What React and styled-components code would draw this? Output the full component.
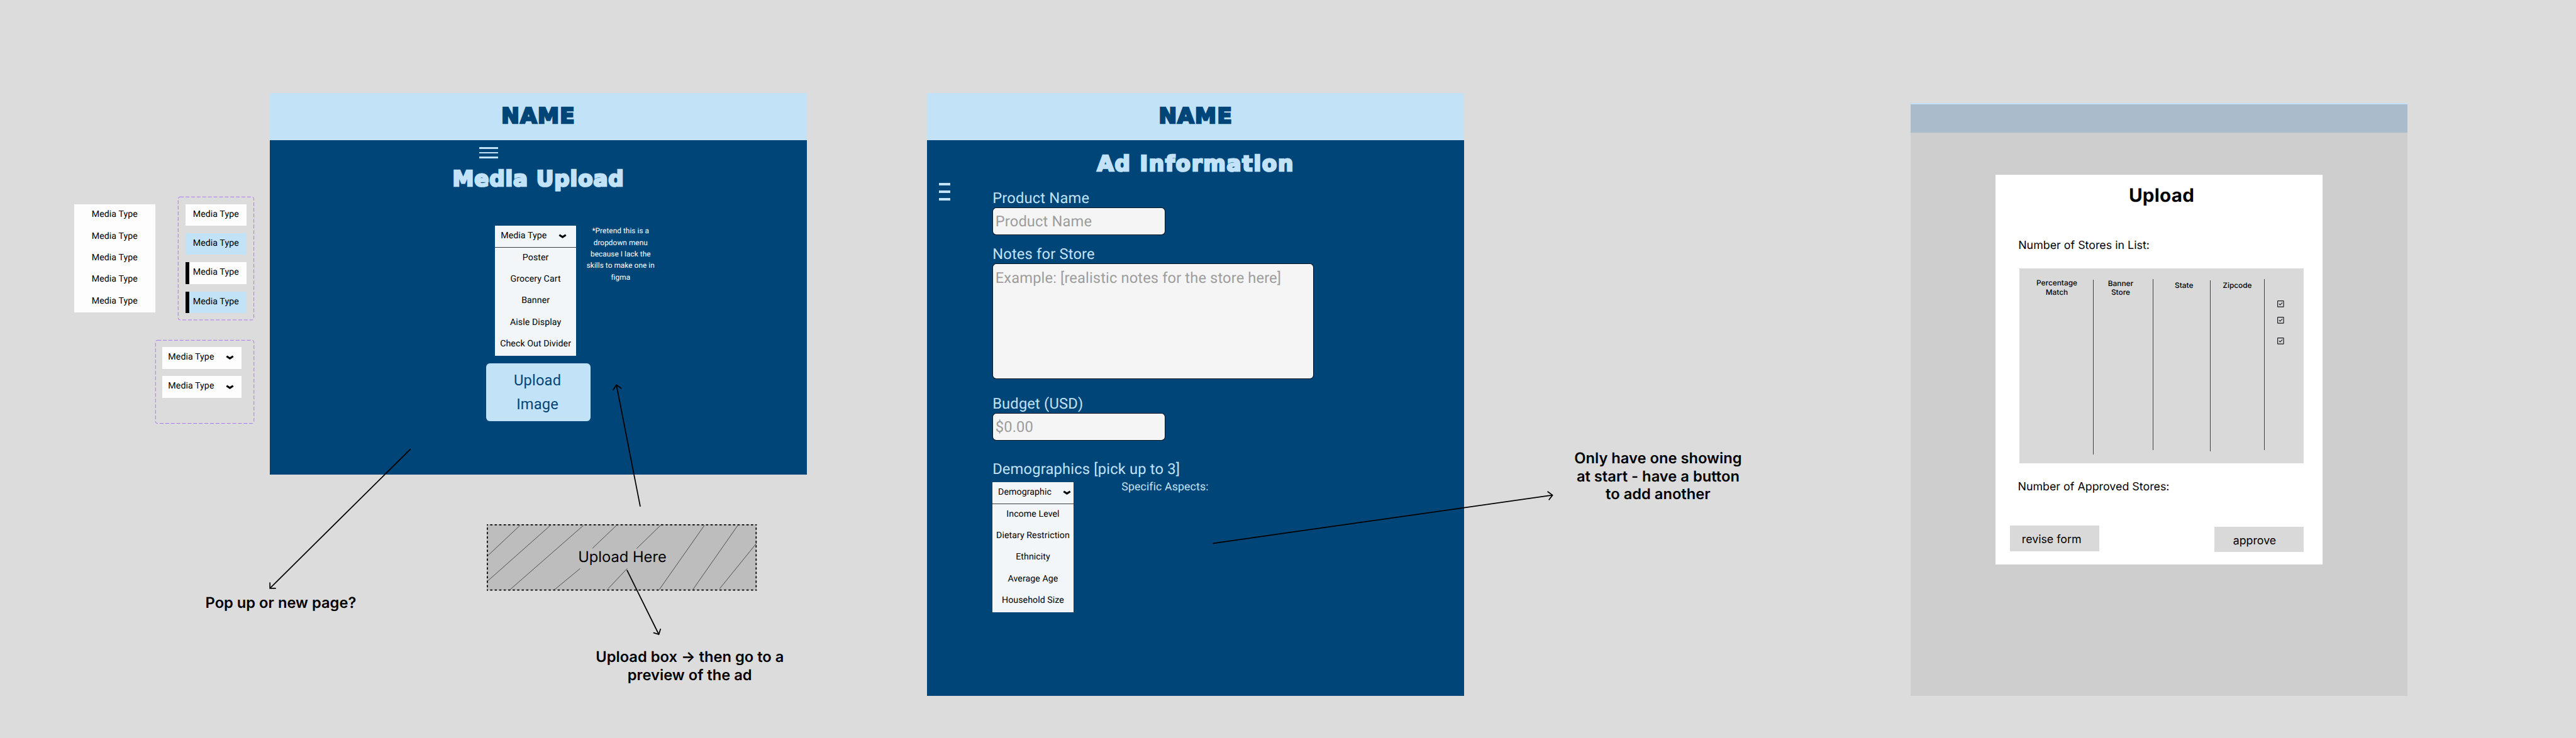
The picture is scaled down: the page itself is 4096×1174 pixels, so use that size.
import React from "react";
import styled, { createGlobalStyle, css } from "styled-components";

const SCALE = 4096 / 6909;
const u = (n) => `${(n * SCALE).toFixed(3)}px`;

const color = {
  canvas: "#dcdcdc",
  navy: "#004578",
  sky: "#c2e2f7",
  option: "#f2f6f9",
  paper: "#fdfdfd",
  field: "#f5f5f5",
  placeholder: "#9d9d9d",
  panel: "#d9d9d9",
  hatch: "#bdbdbd",
  violet: "#9747ff",
};

const GlobalStyle = createGlobalStyle`
  *, *::before, *::after { box-sizing: border-box; }
  html, body { margin: 0; padding: 0; background: ${color.canvas}; }
  button { border: 0; margin: 0; font: inherit; color: inherit; display: block; }
`;

const roboto = css`
  font-family: Roboto, "Liberation Sans", sans-serif;
`;
const inter = css`
  font-family: Inter, "Liberation Sans", sans-serif;
`;

const Canvas = styled.main`
  position: relative;
  width: 4096px;
  height: 1174px;
  overflow: hidden;
  background: ${color.canvas};
  color: #000;
  text-rendering: geometricPrecision;
  ${roboto}
`;

/* An object dropped on the free canvas at its own place */
const Placed = styled.section`
  position: absolute;
  left: ${(p) => u(p.$x)};
  top: ${(p) => u(p.$y)};
`;

/* ---------- option lists ---------- */

const OptionList = styled.div`
  width: ${u(217)};
  background: ${(p) => (p.$tinted ? color.option : color.paper)};
`;

const Option = styled.div`
  display: flex;
  justify-content: center;
  height: ${u(58)};
  line-height: ${u(55.8)};
  font-size: ${u(24)};
  letter-spacing: ${u(0.08)};
  white-space: nowrap;
`;

const SelectHead = styled(Option)`
  position: relative;
  justify-content: space-between;
  padding: 0 ${(p) => u(p.$endPad)} 0 ${u(15)};
  ${(p) =>
    p.$ruled &&
    css`
      &::after {
        content: "";
        position: absolute;
        left: 0;
        right: 0;
        bottom: 0;
        height: 1px;
        background: rgba(0, 0, 0, 0.75);
      }
    `}
`;

const ChevronSvg = styled.svg`
  flex: none;
  width: ${u(22)};
  height: ${u(13)};
  margin-top: ${u(22.2)};
`;

const Chevron = () => (
  <ChevronSvg viewBox="0 0 22 13">
    <path d="M2.2 2.9 L11 8.7 L19.8 2.9" fill="none" stroke="#000" strokeWidth="5.2" />
  </ChevronSvg>
);

/* ---------- component sets ---------- */

const SetBox = styled(Placed)`
  width: ${(p) => u(p.$w)};
  height: ${(p) => u(p.$h)};
  padding: ${u(19.5)} ${u(20)};
`;

const SetOutline = styled.svg`
  position: absolute;
  inset: 0;
  width: 100%;
  height: 100%;
  overflow: visible;
`;

const VariantStack = styled.div`
  display: flex;
  flex-direction: column;
  gap: ${u(20)};
`;

const Variant = styled(Option)`
  width: ${u(164)};
  background: ${(p) => (p.$hover ? color.sky : color.paper)};
  box-shadow: ${(p) => (p.$selected ? `inset ${u(10)} 0 0 #000` : "none")};
`;

const HeadVariant = styled(SelectHead)`
  width: ${u(211)};
  background: ${color.paper};
`;

const DashedSet = ({ x, y, w, h, children }) => (
  <SetBox $x={x} $y={y} $w={w} $h={h}>
    <SetOutline viewBox={`0 0 ${w} ${h}`}>
      <rect x="0.5" y="0.5" width={w - 1} height={h - 1} rx="5" fill="none" stroke={color.violet} strokeWidth="1.15" strokeDasharray="10 5" />
    </SetOutline>
    <VariantStack>{children}</VariantStack>
  </SetBox>
);

/* ---------- blue page frames ---------- */

const Frame = styled(Placed)`
  display: flex;
  flex-direction: column;
  width: ${u(1440)};
  height: ${(p) => u(p.$h)};
  background: ${color.navy};
`;

const display = css`
  font-family: "DejaVu Sans", sans-serif;
  font-weight: 700;
  font-size: ${u(57.5)};
  line-height: ${u(60)};
  white-space: nowrap;
  -webkit-text-stroke: ${u(4.6)} currentColor;
  stroke-linejoin: round;
`;

const Banner = styled.header`
  display: flex;
  align-items: center;
  justify-content: center;
  height: ${u(128)};
  padding-top: ${u(2)};
  background: ${color.sky};
  color: ${color.navy};
`;

const Brand = styled.div`
  ${display}
  letter-spacing: ${u(2.3)};
`;

const Title = styled.h1`
  ${display}
  margin: ${(p) => u(p.$top)} 0 0;
  text-align: center;
  color: ${color.sky};
  letter-spacing: ${(p) => u(p.$spacing)};
`;

const MenuIcon = styled.div`
  display: flex;
  flex: none;
  flex-direction: column;
  justify-content: space-between;
  width: ${(p) => u(p.$w)};
  height: ${(p) => u(p.$h)};
  margin: ${(p) => u(p.$top)} 0 0 ${(p) => u(p.$left)};
`;

const MenuBar = styled.span`
  height: ${(p) => u(p.$thick)};
  background: ${color.sky};
`;

const Hamburger = ({ thick, ...box }) => (
  <MenuIcon {...box}>
    <MenuBar $thick={thick} />
    <MenuBar $thick={thick} />
    <MenuBar $thick={thick} />
  </MenuIcon>
);

const PickerRow = styled.div`
  display: flex;
  align-items: flex-start;
  gap: ${u(19.5)};
  margin-top: ${u(93.4)};
  padding-left: ${u(604)};
`;

const SideNote = styled.p`
  width: ${u(200)};
  margin: ${u(-1.9)} 0 0;
  font-size: ${u(20)};
  line-height: ${u(31)};
  letter-spacing: ${u(0.08)};
  text-align: center;
  color: #fff;
`;

const UploadButton = styled.button`
  align-self: center;
  width: ${u(280)};
  height: ${u(155)};
  margin-top: ${u(21)};
  padding: ${u(3)} ${u(5)} 0 0;
  border-radius: ${u(10)};
  background: ${color.sky};
  color: ${color.navy};
  font-size: ${u(40)};
  line-height: ${u(63)};
  letter-spacing: ${u(0.25)};
  text-align: center;
`;

/* ---------- ad form ---------- */

const FormArea = styled.div`
  display: flex;
  align-items: flex-start;
`;

const Form = styled.div`
  display: flex;
  flex-direction: column;
  margin: ${u(36.7)} 0 0 ${u(114)};
`;

const Label = styled.label`
  margin-top: ${(p) => u(p.$top || 0)};
  font-size: ${u(40)};
  line-height: ${u(48)};
  letter-spacing: ${u(0.3)};
  color: ${color.sky};
  white-space: nowrap;
`;

const Field = styled.div`
  width: ${(p) => u(p.$w)};
  height: ${(p) => u(p.$h)};
  margin-top: ${u(0.7)};
  padding: calc(${u(14)} - 1px) 0 0 calc(${u(7.8)} - 1px);
  border: 1px solid rgba(0, 0, 0, 0.7);
  border-radius: ${u(10)};
  background: ${color.field};
  background-clip: padding-box;
  color: ${color.placeholder};
  font-size: ${u(40)};
  line-height: ${u(48)};
  letter-spacing: ${u(0.2)};
  white-space: nowrap;
`;

const DemographicRow = styled.div`
  display: flex;
  align-items: flex-start;
  gap: ${u(129)};
  margin-top: ${u(11.3)};
`;

const Aspects = styled.div`
  margin-top: ${u(-4.3)};
  font-size: ${u(30)};
  line-height: ${u(36)};
  letter-spacing: ${u(0.18)};
  color: ${color.sky};
`;

/* ---------- upload drop zone ---------- */

const DropZone = styled(Placed)`
  display: flex;
  align-items: center;
  justify-content: center;
  width: ${u(724)};
  height: ${u(178)};
  padding-left: ${u(4)};
  background: ${color.hatch};
  ${inter}
  font-size: ${u(40)};
  line-height: ${u(48)};
`;

const ZoneArt = styled.svg`
  position: absolute;
  inset: 0;
  width: 100%;
  height: 100%;
  overflow: visible;
`;

const ZoneText = styled.span`
  position: relative;
`;

const HATCHES = [
  [3, 84, 89.2, 3],
  [3, 151.7, 170.6, 3],
  [62.5, 175.3, 259.3, 3],
  [181.8, 175.3, 250.6, 118.7],
  [283.6, 64.3, 348, 3],
  [325.7, 172.7, 376.6, 118.7],
  [401.8, 65.3, 469.7, -0.7],
  [462.9, 175, 583.6, 3],
  [553, 175, 673.3, 3],
  [624.8, 172.7, 723.7, 50.7],
];

/* ---------- annotations ---------- */

const Note = styled(Placed)`
  width: ${(p) => u(p.$w)};
  ${inter}
  font-size: ${u(40)};
  font-weight: 600;
  line-height: ${u(48.4)};
  text-align: center;
  white-space: nowrap;
`;

const ArrowLayer = styled.svg`
  position: absolute;
  inset: 0;
  width: 100%;
  height: 100%;
  pointer-events: none;
`;

const ARROWS = [
  "M1100.5 1206 L724 1579 M724 1564.5 V1579.2 H738.8",
  "M1717 1358.6 L1653.2 1033 M1644.9 1046.3 L1653.2 1033 L1665.5 1042",
  "M1682 1531 L1767 1703 M1771.3 1689 L1767 1703 L1753.4 1698.5",
  "M3254 1458.5 L4164 1329 M4151.4 1320 L4164 1329 L4154.9 1341",
];

/* ---------- grey approval frame ---------- */

const GreyFrame = styled(Placed)`
  width: ${u(1331.5)};
  height: ${u(1591)};
  border-top: ${u(3.4)} solid ${color.sky};
  background: #cecece;
`;

const GreyBanner = styled.div`
  height: ${u(76)};
  background: #aabccb;
`;

const Modal = styled.div`
  display: flex;
  flex-direction: column;
  width: ${u(877)};
  height: ${u(1046)};
  margin: ${u(112.2)} 0 0 ${u(227)};
  padding-top: ${u(27)};
  background: #fff;
  ${inter}
`;

const ModalTitle = styled.h2`
  margin: 0;
  padding-left: ${u(14)};
  font-size: ${u(50)};
  font-weight: 700;
  line-height: ${u(60)};
  letter-spacing: ${u(0.4)};
  text-align: center;
`;

const CountLabel = styled.div`
  margin: ${(p) => u(p.$top)} 0 0 ${(p) => u(p.$left)};
  font-size: ${u(30)};
  line-height: ${u(36)};
  letter-spacing: ${u(0.06)};
`;

const StoreTable = styled.div`
  display: flex;
  flex: none;
  width: ${u(763)};
  height: ${u(523.5)};
  margin: ${u(42.7)} 0 0 ${u(63.5)};
  background: ${color.panel};
`;

const Column = styled.div`
  width: ${(p) => u(p.$w)};
  padding: ${(p) => u(p.$top)} ${(p) => u(p.$right || 0)} 0 ${(p) => u(p.$left || 0)};
  font-size: ${u(20)};
  font-weight: 500;
  line-height: ${u(24)};
  text-align: center;
`;

const Divider = styled.div`
  flex: none;
  width: 1px;
  height: ${(p) => u(p.$h)};
  margin: ${(p) => u(p.$top)} -1px 0 0;
  background: rgba(0, 0, 0, 0.7);
`;

const CheckColumn = styled.div`
  display: flex;
  flex-direction: column;
  padding: ${u(87.4)} 0 0 ${u(36)};
`;

const CheckSvg = styled.svg`
  width: ${u(18)};
  height: ${u(18)};
  margin-bottom: ${(p) => u(p.$gap || 0)};
`;

const Check = ({ gap }) => (
  <CheckSvg viewBox="0 0 18 18" $gap={gap} fill="none" stroke="#1d1b20">
    <rect x="1" y="1" width="16" height="16" rx="1" strokeWidth="2" />
    <path d="M4.6 8.8 L7.6 11.8 L13.8 5.6" strokeWidth="1.8" />
  </CheckSvg>
);

const Actions = styled.div`
  display: flex;
  justify-content: space-between;
  align-items: flex-start;
  margin-top: ${u(86.8)};
  padding: 0 ${u(50.5)} 0 ${u(39)};
`;

const Action = styled.button`
  width: ${u(240)};
  height: ${u(68)};
  margin-top: ${(p) => u(p.$drop || 0)};
  padding: ${u(3)} ${(p) => u(p.$shift)} 0 0;
  background: ${color.panel};
  font-size: ${u(30)};
  line-height: ${u(36)};
  text-align: center;
`;

const MEDIA = ["Poster", "Grocery Cart", "Banner", "Aisle Display", "Check Out Divider"];
const DEMOGRAPHICS = ["Income Level", "Dietary Restriction", "Ethnicity", "Average Age", "Household Size"];
const VARIANTS = [{}, { $hover: true }, { $selected: true }, { $hover: true, $selected: true }];

const Dropdown = ({ label, options, endPad }) => (
  <OptionList $tinted>
    <SelectHead $ruled $endPad={endPad}>
      {label}
      <Chevron />
    </SelectHead>
    {options.map((o) => (
      <Option key={o}>{o}</Option>
    ))}
  </OptionList>
);

export default function App() {
  return (
    <>
      <GlobalStyle />
      <Canvas>
        <Placed $x={199} $y={548.8}>
          <OptionList>
            {[0, 1, 2, 3, 4].map((i) => (
              <Option key={i}>Media Type</Option>
            ))}
          </OptionList>
        </Placed>

        <DashedSet x={477} y={528.5} w={204} h={331}>
          {VARIANTS.map((v, i) => (
            <Variant key={i} {...v}>Media Type</Variant>
          ))}
        </DashedSet>

        <DashedSet x={416} y={912} w={265} h={224}>
          {[0, 1].map((i) => (
            <HeadVariant key={i} $endPad={20}>
              Media Type
              <Chevron />
            </HeadVariant>
          ))}
        </DashedSet>

        <Frame $x={724} $y={249} $h={1024}>
          <Banner><Brand>NAME</Brand></Banner>
          <Hamburger $w={51} $h={30} $top={18} $left={561.5} thick={4.5} />
          <Title $top={27.7} $spacing={1.5}>Media Upload</Title>
          <PickerRow>
            <Dropdown label="Media Type" options={MEDIA} endPad={26} />
            <SideNote>
              *Pretend this is a<br />dropdown menu<br />because I lack the<br />skills to make one in<br />figma
            </SideNote>
          </PickerRow>
          <UploadButton>Upload<br />Image</UploadButton>
        </Frame>

        <Frame $x={2487} $y={249} $h={1619}>
          <Banner><Brand>NAME</Brand></Banner>
          <Title $top={34.3} $spacing={3}>Ad Information</Title>
          <FormArea>
            <Hamburger $w={30} $h={48.5} $top={19.1} $left={31} thick={7.3} />
            <Form>
              <Label>Product Name</Label>
              <Field $w={464} $h={74}>Product Name</Field>
              <Label $top={28}>Notes for Store</Label>
              <Field $w={862} $h={310}>Example: [realistic notes for the store here]</Field>
              <Label $top={42}>Budget (USD)</Label>
              <Field $w={464} $h={74}>$0.00</Field>
              <Label $top={53}>Demographics [pick up to 3]</Label>
              <DemographicRow>
                <Dropdown label="Demographic" options={DEMOGRAPHICS} endPad={6.5} />
                <Aspects>Specific Aspects:</Aspects>
              </DemographicRow>
            </Form>
          </FormArea>
        </Frame>

        <DropZone $x={1305} $y={1406}>
          <ZoneArt viewBox="0 0 724 178" fill="none" stroke="#000">
            {HATCHES.map(([x1, y1, x2, y2]) => (
              <line key={x1} x1={x1} y1={y1} x2={x2} y2={y2} strokeWidth="1" />
            ))}
            <path d="M0 1.5 H724 M0 176.5 H724" strokeWidth="3" strokeDasharray="6.03 6.03" strokeDashoffset="3" />
            <path d="M1.5 0 V178 M722.5 0 V178" strokeWidth="3" strokeDasharray="5.93 5.93" strokeDashoffset="3" />
          </ZoneArt>
          <ZoneText>Upload Here</ZoneText>
        </DropZone>

        <Note $x={503} $y={1594.7} $w={500}>Pop up or new page?</Note>
        <Note $x={1550} $y={1739.8} $w={600}>Upload box → then go to a<br />preview of the ad</Note>
        <Note $x={4147} $y={1205.9} $w={600}>
          Only have one showing<br />at start - have a button<br />to add another
        </Note>

        <GreyFrame $x={5125} $y={276.7}>
          <GreyBanner />
          <Modal>
            <ModalTitle>Upload</ModalTitle>
            <CountLabel $top={85.6} $left={61.2}>Number of Stores in List:</CountLabel>
            <StoreTable>
              <Column $w={198.4} $top={28.5} $left={4}>Percentage<br />Match</Column>
              <Divider $top={31} $h={469} />
              <Column $w={159.8} $top={29.6} $right={12}>Banner<br />Store</Column>
              <Divider $top={29} $h={459} />
              <Column $w={154} $top={33.8} $left={14}>State</Column>
              <Divider $top={33} $h={458} />
              <Column $w={145} $top={33.8} $left={1}>Zipcode</Column>
              <Divider $top={29} $h={459} />
              <CheckColumn>
                <Check gap={26} />
                <Check gap={37} />
                <Check />
              </CheckColumn>
            </StoreTable>
            <CountLabel $top={45} $left={60}>Number of Approved Stores:</CountLabel>
            <Actions>
              <Action $shift={17}>revise form</Action>
              <Action $shift={23} $drop={3}>approve</Action>
            </Actions>
          </Modal>
        </GreyFrame>

        <ArrowLayer viewBox="0 0 6909 1981" preserveAspectRatio="none" fill="none" stroke="#000" strokeWidth="3" strokeLinecap="round" strokeLinejoin="round">
          {ARROWS.map((d) => (
            <path key={d} d={d} />
          ))}
        </ArrowLayer>
      </Canvas>
    </>
  );
}
